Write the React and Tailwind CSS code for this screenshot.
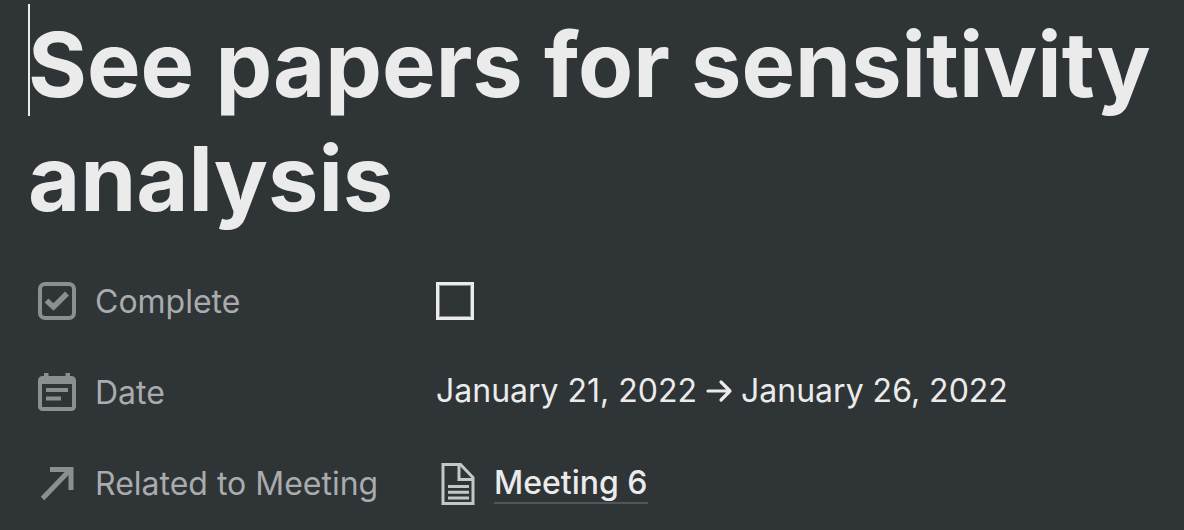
function CompleteIcon() {
  return (
    <svg aria-hidden="true" viewBox="0 0 38 38" className="size-[38px] shrink-0" fill="none" stroke="currentColor">
      <rect x="2" y="2" width="34" height="34" rx="5" strokeWidth="4" />
      <path d="M8.500 18.500L15.500 25L29 11.500" strokeWidth="5.4" />
    </svg>
  );
}

function DateIcon() {
  return (
    <svg aria-hidden="true" viewBox="0 0 38 38" className="size-[38px] shrink-0" fill="currentColor">
      <path
        fillRule="evenodd"
        d="M6 0h4.500v3h17V0H32v3h1.500A4.500 4.500 0 0 1 38 7.500v26a4.500 4.500 0 0 1-4.500 4.500h-29A4.500 4.500 0 0 1 0 33.500v-26A4.500 4.500 0 0 1 4.500 3H6zM4 11v23h30V11z"
      />
      <path d="M8 15h22v4H8zM8 23.500h15v4H8z" />
    </svg>
  );
}

function RelationIcon() {
  return (
    <svg aria-hidden="true" viewBox="0 0 38 38" className="size-[38px] shrink-0" fill="none" stroke="currentColor" strokeWidth="5">
      <path d="M12 5.500H33V26" />
      <path d="M4.500 34.500L32 6" />
    </svg>
  );
}

function PageIcon() {
  return (
    <svg aria-hidden="true" viewBox="0 0 34 42" className="h-[42px] w-[34px] shrink-0" fill="none" stroke="currentColor" strokeWidth="3">
      <path d="M2 1.500H19.500L32 14.500V40.500H2z" />
      <path d="M18 2V16.500H32" />
      <path d="M7 23.500H28M7 29.200H28M7 35H28" />
    </svg>
  );
}

function Property({ icon, label, htmlFor, children }) {
  const Label = htmlFor ? "label" : "span";
  return (
    <div className="flex min-h-[46px] items-center">
      <div className="flex w-[398px] shrink-0 items-center gap-[19px] text-[#8b8f92]">
        {icon}
        <Label htmlFor={htmlFor} className="pt-0.5 text-[32px] leading-[44px] text-[#a9abad]">
          {label}
        </Label>
      </div>
      {children}
    </div>
  );
}

export default function App() {
  return (
    <main className="min-h-screen bg-[#2f3437] px-7 font-['Inter',sans-serif] text-[#ebebeb]">
      <h1 className="relative pt-2 text-[90px] leading-[114px] font-bold">
        <span aria-hidden="true" className="absolute top-1 left-0 h-28 w-0.5 bg-[#ebebeb]" />
        See papers for sensitivity analysis
      </h1>
      <div className="mt-[42px] flex flex-col gap-[45px] pl-2.5">
        <Property icon={<CompleteIcon />} label="Complete" htmlFor="complete">
          <input id="complete" type="checkbox" className="size-[38px] appearance-none border-3 border-[#ebebeb] inset-ring inset-ring-[#85898b] checked:bg-[#ebebeb]" />
        </Property>
        <Property icon={<DateIcon />} label="Date">
          <div className="flex items-center gap-2 pb-0.5 text-[32px] leading-[44px]">
            <time dateTime="2022-01-21">January 21, 2022</time>
            <svg aria-label="to" role="img" viewBox="0 0 28 24" className="h-6 w-7" fill="none" stroke="currentColor" strokeWidth="3.2" strokeLinecap="round" strokeLinejoin="round">
              <path d="M3 12H25M16 3L25 12L16 21" />
            </svg>
            <time dateTime="2022-01-26">January 26, 2022</time>
          </div>
        </Property>
        <Property icon={<RelationIcon />} label="Related to Meeting">
          <a href="#meeting-6" className="flex items-center gap-[19px] pt-0.5 pl-[5px] text-[32px] font-medium">
            <span className="text-[#c4c7c9]">
              <PageIcon />
            </span>
            <span className="border-b-2 border-[#505558] leading-[38px]">Meeting 6</span>
          </a>
        </Property>
      </div>
    </main>
  );
}
